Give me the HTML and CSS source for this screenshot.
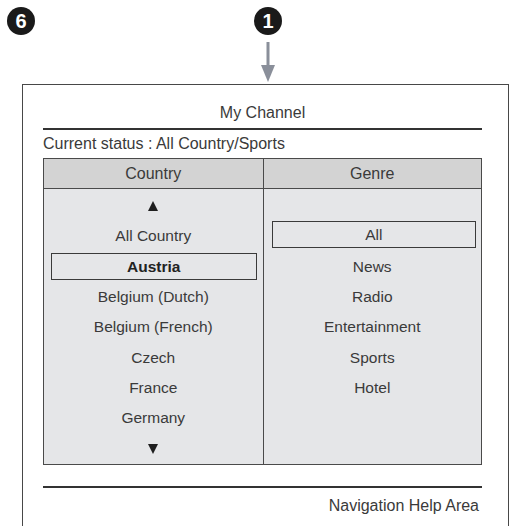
FILE: index.html
```html
<!DOCTYPE html>
<html lang="en">
<head>
    <meta charset="UTF-8">
    <meta name="viewport" content="width=device-width, initial-scale=1.0">
    <title>My Channel</title>
    <link rel="stylesheet" href="styles.css">
</head>
<body>
    <div class="markers">
        <div class="badge">6</div>
        <div class="pointer">
            <div class="badge">1</div>
            <svg class="arrow" width="14" height="42" viewBox="0 0 14 42">
                <rect x="5.5" y="0" width="3" height="25" fill="#8a8f9a"/>
                <polygon points="0,23 14,23 7,40" fill="#8a8f9a"/>
            </svg>
        </div>
    </div>

    <div class="screen">
        <div class="title">My Channel</div>
        <div class="status">Current status : All Country/Sports</div>

        <div class="lists">
            <div class="col">
                <div class="col-head">Country</div>
                <ul class="col-body">
                    <li><span class="tri up"></span></li>
                    <li>All Country</li>
                    <li><span class="sel bold">Austria</span></li>
                    <li>Belgium (Dutch)</li>
                    <li>Belgium (French)</li>
                    <li>Czech</li>
                    <li>France</li>
                    <li>Germany</li>
                    <li><span class="tri down"></span></li>
                </ul>
            </div>
            <div class="col">
                <div class="col-head">Genre</div>
                <ul class="col-body">
                    <li></li>
                    <li><span class="sel genre">All</span></li>
                    <li>News</li>
                    <li>Radio</li>
                    <li>Entertainment</li>
                    <li>Sports</li>
                    <li>Hotel</li>
                </ul>
            </div>
        </div>

        <div class="help">Navigation Help Area</div>
    </div>
</body>
</html>
```

FILE: styles.css
```css
html, body {
    margin: 0;
    padding: 0;
    background: #fff;
    overflow: hidden;
}

body {
    width: 510px;
    height: 526px;
    font-family: "Liberation Sans", Arial, sans-serif;
    color: #3a3a3a;
}

.markers {
    display: flex;
    align-items: flex-start;
    height: 84px;
    padding: 7px 0 0 7px;
    box-sizing: border-box;
}

.badge {
    width: 28px;
    height: 28px;
    border-radius: 50%;
    background: #1a1a1a;
    color: #fff;
    font-weight: bold;
    font-size: 20px;
    line-height: 28px;
    text-align: center;
}

.pointer {
    margin-left: 219px;
    display: flex;
    flex-direction: column;
    align-items: center;
}

.arrow {
    display: block;
    margin-top: 7px;
}

.screen {
    margin-left: 22px;
    width: 487px;
    height: 460px;
    box-sizing: border-box;
    border: 1.5px solid #484848;
    border-bottom: none;
    padding: 13px 26px 0 20px;
}

.title {
    font-size: 16px;
    line-height: 30px;
    text-align: center;
    border-bottom: 2px solid #333;
}

.status {
    font-size: 16px;
    line-height: 28px;
}

.lists {
    display: grid;
    grid-template-columns: 1fr 1fr;
    border: 1.5px solid #4a4a4a;
    background: #e5e6e8;
}

.col + .col {
    border-left: 1.5px solid #4a4a4a;
}

.col-head {
    background: #d3d3d3;
    border-bottom: 1.5px solid #4a4a4a;
    font-size: 16px;
    line-height: 29px;
    text-align: center;
}

.col-body {
    list-style: none;
    margin: 0;
    padding: 2px 0 0;
}

.col-body li {
    height: 30.3px;
    display: flex;
    align-items: center;
    justify-content: center;
    font-size: 15.5px;
}

.sel {
    flex: 1;
    height: 27px;
    line-height: 26px;
    box-sizing: border-box;
    border: 1.5px solid #3a3a3a;
    text-align: center;
    margin: 0 6px 0 7px;
}

.sel.genre {
    margin: -3px 5px 0 8px;
}

.bold {
    font-weight: bold;
    color: #222;
}

.tri {
    width: 0;
    height: 0;
    border-left: 5.5px solid transparent;
    border-right: 5.5px solid transparent;
}

.tri.up {
    border-bottom: 10px solid #1e1e1e;
}

.tri.down {
    border-top: 10px solid #1e1e1e;
}

.help {
    margin-top: 21px;
    border-top: 2px solid #333;
    padding: 3px 3px 0 0;
    font-size: 16px;
    line-height: 30px;
    text-align: right;
}
```
